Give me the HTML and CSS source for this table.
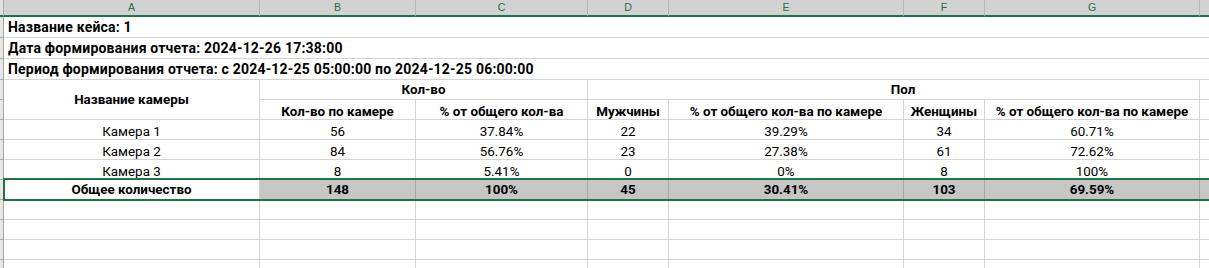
FILE: index.html
```html
<!DOCTYPE html>
<html lang="ru">
<head>
<meta charset="utf-8">
<title>Отчет</title>
<link rel="stylesheet" href="styles.css">
</head>
<body>
<div class="sheet">
  <div class="corner"></div>
  <div class="ch">A</div><div class="ch">B</div><div class="ch">C</div><div class="ch">D</div><div class="ch">E</div><div class="ch">F</div><div class="ch">G</div><div class="ch"></div>

  <div class="rh"></div><div class="c info">Название кейса: 1</div>
  <div class="rh"></div><div class="c info">Дата формирования отчета: 2024-12-26 17:38:00</div>
  <div class="rh"></div><div class="c info">Период формирования отчета: с 2024-12-25 05:00:00 по 2024-12-25 06:00:00</div>

  <div class="rh"></div>
  <div class="c b mid rows2">Название камеры</div>
  <div class="c b top span2">Кол-во</div>
  <div class="c b top span4 pol">Пол</div>
  <div class="c"></div>

  <div class="rh"></div>
  <div class="c b">Кол-во по камере</div>
  <div class="c b">% от общего кол-ва</div>
  <div class="c b">Мужчины</div>
  <div class="c b">% от общего кол-ва по камере</div>
  <div class="c b">Женщины</div>
  <div class="c b">% от общего кол-ва по камере</div>
  <div class="c"></div>

  <div class="rh"></div>
  <div class="c">Камера 1</div><div class="c">56</div><div class="c">37.84%</div><div class="c">22</div><div class="c">39.29%</div><div class="c">34</div><div class="c">60.71%</div><div class="c"></div>

  <div class="rh"></div>
  <div class="c">Камера 2</div><div class="c">84</div><div class="c">56.76%</div><div class="c">23</div><div class="c">27.38%</div><div class="c">61</div><div class="c">72.62%</div><div class="c"></div>

  <div class="rh"></div>
  <div class="c">Камера 3</div><div class="c">8</div><div class="c">5.41%</div><div class="c">0</div><div class="c">0%</div><div class="c">8</div><div class="c">100%</div><div class="c"></div>

  <div class="rh"></div>
  <div class="c b tot">Общее количество</div>
  <div class="c b tot sel">148</div><div class="c b tot sel">100%</div><div class="c b tot sel">45</div><div class="c b tot sel">30.41%</div><div class="c b tot sel">103</div><div class="c b tot sel">69.59%</div><div class="c tot sel"></div>

  <div class="rh"></div><div class="c"></div><div class="c"></div><div class="c"></div><div class="c"></div><div class="c"></div><div class="c"></div><div class="c"></div><div class="c"></div>
  <div class="rh"></div><div class="c"></div><div class="c"></div><div class="c"></div><div class="c"></div><div class="c"></div><div class="c"></div><div class="c"></div><div class="c"></div>
  <div class="rh"></div><div class="c"></div><div class="c"></div><div class="c"></div><div class="c"></div><div class="c"></div><div class="c"></div><div class="c"></div><div class="c"></div>
  <div class="rh"></div><div class="c"></div><div class="c"></div><div class="c"></div><div class="c"></div><div class="c"></div><div class="c"></div><div class="c"></div><div class="c"></div>

  <div class="selbox"></div>
</div>
</body>
</html>
```

FILE: styles.css
```css
html, body {
  margin: 0;
  padding: 0;
  background: #ffffff;
  overflow: hidden;
}

.sheet {
  position: relative;
  display: grid;
  grid-template-columns: 4px 256px 156px 172px 81px 235px 81px 215px 40px;
  grid-template-rows: 17px 21px 21px 21px repeat(10, 20px);
  width: 1240px;
  font-family: Roboto, "Liberation Sans", sans-serif;
  font-size: 13.4px;
  color: #000;
}

.corner {
  background: #e1e1e1;
  border-right: 1px solid #ababab;
  border-bottom: 2px solid #217346;
}

.ch {
  box-sizing: border-box;
  background: #d2d2d2;
  border-right: 1px solid #b8b8b8;
  border-bottom: 2px solid #217346;
  color: #1f6f4a;
  font-family: "Liberation Sans", sans-serif;
  font-size: 10.5px;
  line-height: 15px;
  text-align: center;
}

.rh {
  box-sizing: border-box;
  background: #e6e6e6;
  border-right: 1px solid #a6a6a6;
  border-bottom: 1px solid #ababab;
}

.c {
  box-sizing: border-box;
  border-right: 1px solid #d4d4d4;
  border-bottom: 1px solid #d4d4d4;
  display: flex;
  align-items: flex-end;
  justify-content: center;
  white-space: nowrap;
  line-height: 15px;
  min-width: 0;
}

.b { font-weight: 700; }

.info {
  grid-column: 2 / -1;
  justify-content: flex-start;
  padding-left: 4px;
  padding-bottom: 2px;
  font-weight: 700;
  font-size: 14px;
  letter-spacing: 0.2px;
  border-right: none;
}

.rows2 { grid-row: span 2; }
.span2 { grid-column: span 2; }
.span4 { grid-column: span 4; }

.mid { align-items: center; }
.top { padding-bottom: 2px; }
.pol { padding-left: 19px; }

.tot { padding-bottom: 2px; }

.sel {
  background: #c6c6c6;
  border-right-color: #a9a9a9;
}

.selbox {
  position: absolute;
  left: 3px;
  top: 178px;
  right: -10px;
  height: 23px;
  box-sizing: border-box;
  border: 2px solid #217346;
  pointer-events: none;
}
```
